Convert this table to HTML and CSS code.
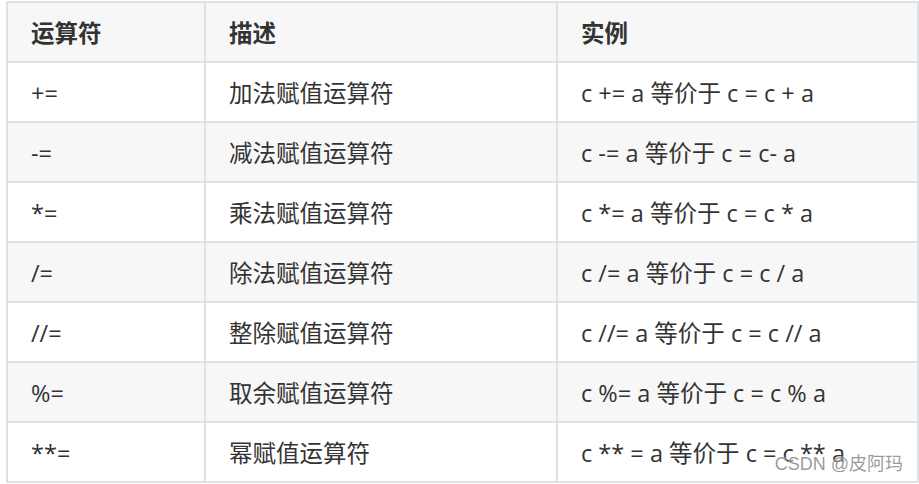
FILE: index.html
```html
<!DOCTYPE html>
<html lang="zh">
<head>
<meta charset="utf-8">
<link rel="stylesheet" href="styles.css">
</head>
<body>
<div class="wrap">
  <table class="ops">
    <colgroup>
      <col class="c1">
      <col class="c2">
      <col class="c3">
    </colgroup>
    <thead>
      <tr><th>运算符</th><th>描述</th><th>实例</th></tr>
    </thead>
    <tbody>
      <tr><td>+=</td><td>加法赋值运算符</td><td>c += a 等价于 c = c + a</td></tr>
      <tr><td>-=</td><td>减法赋值运算符</td><td>c -= a 等价于 c = c- a</td></tr>
      <tr><td>*=</td><td>乘法赋值运算符</td><td>c *= a 等价于 c = c * a</td></tr>
      <tr><td>/=</td><td>除法赋值运算符</td><td>c /= a 等价于 c = c / a</td></tr>
      <tr><td>//=</td><td>整除赋值运算符</td><td>c //= a 等价于 c = c // a</td></tr>
      <tr><td>%=</td><td>取余赋值运算符</td><td>c %= a 等价于 c = c % a</td></tr>
      <tr><td>**=</td><td>幂赋值运算符</td><td>c ** = a 等价于 c = c ** a</td></tr>
    </tbody>
  </table>
  <div class="watermark">CSDN @皮阿玛</div>
</div>
</body>
</html>
```
FILE: styles.css
```css
html, body {
  margin: 0;
  padding: 0;
  background: #ffffff;
}
body {
  padding: 1px 0 0 6px;
  font-family: "Open Sans", "Noto Sans CJK SC", sans-serif;
  color: #333333;
  overflow: hidden;
}
.wrap {
  position: relative;
  width: 913px;
}
.ops {
  width: 913px;
  table-layout: fixed;
  border-collapse: collapse;
  border: 2px solid #dfe2e5;
  font-size: 23.5px;
}
.c1 { width: 198px; }
.c2 { width: 352px; }
.c3 { width: 361px; }
.ops th,
.ops td {
  border: 2px solid #dfe2e5;
  height: 55px;
  padding: 3px 23px 0;
  text-align: left;
  vertical-align: middle;
  white-space: nowrap;
  line-height: 1;
}
.ops th {
  font-weight: 700;
  background: #f7f7f7;
}
.ops tbody tr:nth-child(even) td {
  background: #f7f7f7;
}
.ops tbody tr:nth-child(odd) td {
  background: #ffffff;
}
.watermark {
  position: absolute;
  right: 16px;
  bottom: 8px;
  font-family: "Liberation Sans", "Noto Sans CJK SC", sans-serif;
  font-size: 18px;
  color: rgba(120, 120, 120, 0.75);
  text-shadow: 0 0 2px #ffffff;
}
```
